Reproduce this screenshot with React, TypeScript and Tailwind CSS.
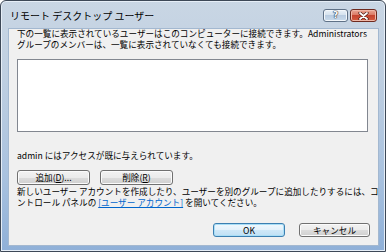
import React from "react";

const FONT = '"Noto Sans CJK JP", "Liberation Sans", sans-serif';

function Btn({
  children,
  def,
  className = "",
}: {
  children: React.ReactNode;
  def?: boolean;
  className?: string;
}) {
  return (
    <div
      className={
        "flex items-center justify-center rounded-[3px] border text-[8.6px] leading-none text-black " +
        (def
          ? "border-[#3c7fb1] bg-[linear-gradient(#f0f8fd_0%,#e3f1fb_50%,#cfe8f8_50%,#c0e0f5_100%)] shadow-[inset_0_0_0_1px_#a9def6] "
          : "border-[#707070] bg-[linear-gradient(#f2f2f2_0%,#ebebeb_50%,#dddddd_50%,#cfcfcf_100%)] shadow-[inset_0_0_0_1px_#fbfbfb] ") +
        className
      }
    >
      {children}
    </div>
  );
}

export default function App() {
  return (
    <div className="w-[386px] h-[252px] overflow-hidden" style={{ fontFamily: FONT }}>
      <div className="w-[386px] h-[252px] flex flex-col rounded-t-[6px] border border-[#3d4857] bg-[linear-gradient(180deg,#c9d6e4_0%,#bfcfe1_30%,#a9c2df_70%,#8fb0d8_100%)] shadow-[inset_0_0_0_1px_#e6eef7]">
        {/* Title bar */}
        <div className="h-[27px] flex items-start justify-between pl-[9px] pr-[8px] shrink-0">
          <div className="mt-[8px] text-[10px] leading-[14px] text-black">
            リモート デスクトップ ユーザー
          </div>
          <div className="mt-[8px] flex gap-[2px]">
            <div className="w-[25px] h-[13px] rounded-[3px] border border-[#5f7187] bg-[linear-gradient(#eaf1f8_0%,#d6e2ee_45%,#b9cce1_50%,#cadbec_100%)] shadow-[inset_0_0_0_1px_#f3f7fb] flex items-center justify-center">
              <span className="text-[9px] leading-none font-bold text-white [text-shadow:0_0_1px_#223348,0_0_1px_#223348,0_0_1px_#223348]" style={{ fontFamily: '"DejaVu Sans", sans-serif' }}>
                ?
              </span>
            </div>
            <div className="w-[27px] h-[13px] rounded-[3px] border border-[#6e2a1f] bg-[linear-gradient(#eaa896_0%,#db7a65_45%,#c5442f_50%,#d45c40_100%)] shadow-[inset_0_0_0_1px_#f0b8a8] flex items-center justify-center">
              <svg width="11" height="8" viewBox="0 0 11 8">
                <path d="M2 1 L9 7 M9 1 L2 7" stroke="#4a1a12" strokeWidth="3.2" strokeLinecap="round" />
                <path d="M2 1 L9 7 M9 1 L2 7" stroke="#ffffff" strokeWidth="1.8" strokeLinecap="round" />
              </svg>
            </div>
          </div>
        </div>

        {/* Client area */}
        <div className="flex-1 ml-[7px] mr-[6px] mb-[5px] bg-[#f0f0f0] border border-[#a3b8d0] flex flex-col pl-[8px] pr-[10px] text-[8.6px] leading-[11px] text-black">
          <div className="-mt-[1px]">
            <div className="whitespace-nowrap">
              下の一覧に表示されているユーザーはこのコンピューターに接続できます。Administrators
            </div>
            <div className="whitespace-nowrap">
              グループのメンバーは、一覧に表示されていなくても接続できます。
            </div>
          </div>

          <div className="mt-[9px] h-[73px] w-[351px] bg-white border border-[#828790]" />

          <div className="mt-[18px] whitespace-nowrap">admin にはアクセスが既に与えられています。</div>

          <div className="mt-[9px] flex gap-[10px]">
            <Btn className="w-[73px] h-[15px]">
              追加(<span className="underline">D</span>)...
            </Btn>
            <Btn className="w-[73px] h-[15px]">
              削除(<span className="underline">R</span>)
            </Btn>
          </div>

          <div className="mt-[1px]">
            <div className="whitespace-nowrap">
              新しいユーザー アカウントを作成したり、ユーザーを別のグループに追加したりするには、コ
            </div>
            <div className="whitespace-nowrap">
              ントロール パネルの <span className="text-[#0066cc] underline">[ユーザー アカウント]</span> を開いてください。
            </div>
          </div>

          <div className="flex-1" />

          <div className="flex justify-end gap-[14px] pb-[8px] -mr-[2px]">
            <Btn def className="w-[72px] h-[14px]">
              OK
            </Btn>
            <Btn className="w-[71px] h-[14px]">キャンセル</Btn>
          </div>
        </div>
      </div>
    </div>
  );
}
